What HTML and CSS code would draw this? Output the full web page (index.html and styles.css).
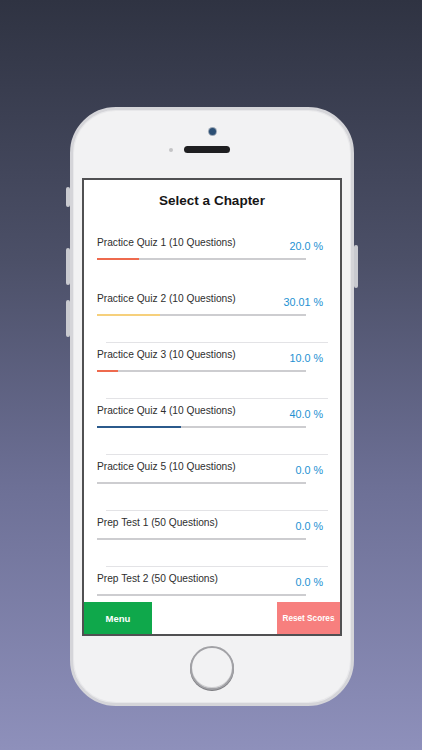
FILE: index.html
```html
<!DOCTYPE html>
<html>
<head>
<meta charset="utf-8">
<link rel="stylesheet" href="styles.css">
</head>
<body>
<div class="phone">
  <span class="btn-side mute"></span>
  <span class="btn-side vol-up"></span>
  <span class="btn-side vol-down"></span>
  <span class="btn-side power"></span>
  <div class="top">
    <div class="camera"></div>
    <div class="speaker-row">
      <span class="sensor"></span>
      <span class="speaker"></span>
    </div>
  </div>
  <div class="screen">
    <div class="title">Select a Chapter</div>
    <div class="list">
      <div class="row">
        <div class="line"><span class="label">Practice Quiz 1 (10 Questions)</span><span class="pct">20.0 %</span></div>
        <div class="bar"><span class="fill red" style="width:20%"></span></div>
      </div>
      <div class="row">
        <div class="line"><span class="label">Practice Quiz 2 (10 Questions)</span><span class="pct">30.01 %</span></div>
        <div class="bar"><span class="fill yellow" style="width:30.01%"></span></div>
      </div>
      <div class="row sep">
        <div class="line"><span class="label">Practice Quiz 3 (10 Questions)</span><span class="pct">10.0 %</span></div>
        <div class="bar"><span class="fill red" style="width:10%"></span></div>
      </div>
      <div class="row sep">
        <div class="line"><span class="label">Practice Quiz 4 (10 Questions)</span><span class="pct">40.0 %</span></div>
        <div class="bar"><span class="fill blue" style="width:40%"></span></div>
      </div>
      <div class="row sep">
        <div class="line"><span class="label">Practice Quiz 5 (10 Questions)</span><span class="pct">0.0 %</span></div>
        <div class="bar"></div>
      </div>
      <div class="row sep">
        <div class="line"><span class="label">Prep Test 1 (50 Questions)</span><span class="pct">0.0 %</span></div>
        <div class="bar"></div>
      </div>
      <div class="row sep">
        <div class="line"><span class="label">Prep Test 2 (50 Questions)</span><span class="pct">0.0 %</span></div>
        <div class="bar"></div>
      </div>
    </div>
    <div class="toolbar">
      <div class="tb-btn menu">Menu</div>
      <div class="tb-btn reset">Reset Scores</div>
    </div>
  </div>
  <div class="bottom">
    <div class="home"></div>
  </div>
</div>
</body>
</html>
```
FILE: styles.css
```css
* { box-sizing: border-box; }
html, body { margin: 0; padding: 0; }
body {
  width: 422px;
  height: 750px;
  overflow: hidden;
  background: linear-gradient(180deg, #2f3342 0%, #4c5068 35%, #6d7096 65%, #8e90bb 100%);
  display: flex;
  justify-content: center;
  padding-top: 107px;
  padding-left: 2px;
  font-family: "Liberation Sans", Arial, sans-serif;
}
.phone {
  position: relative;
  width: 284px;
  height: 599px;
  background: #f2f2f3;
  border: 3px solid #d5d5d9;
  border-radius: 46px;
  display: flex;
  flex-direction: column;
  align-items: center;
  box-shadow: inset 0 0 0 1px #e8e8ea;
}
.btn-side {
  position: absolute;
  width: 4px;
  background: #c9cad0;
  border-radius: 2px;
}
.mute { left: -7px; top: 77px; height: 20px; }
.vol-up { left: -7px; top: 138px; height: 37px; }
.vol-down { left: -7px; top: 190px; height: 37px; }
.power { right: -7px; top: 135px; height: 43px; }
.top {
  height: 68px;
  display: flex;
  flex-direction: column;
  align-items: center;
  padding-top: 18px;
}
.camera {
  width: 7px;
  height: 7px;
  border-radius: 50%;
  background: #2c4f74;
  box-shadow: 0 0 0 1px #9aa6b4;
}
.speaker-row {
  margin-top: 11px;
  display: flex;
  align-items: center;
  margin-left: -26px;
}
.sensor {
  width: 4px;
  height: 4px;
  border-radius: 50%;
  background: #c4c4c6;
  margin-right: 11px;
}
.speaker {
  width: 46px;
  height: 7px;
  border-radius: 4px;
  background: #1f1f21;
}
.screen {
  width: 260px;
  height: 458px;
  border: 2px solid #505052;
  background: #ffffff;
  display: flex;
  flex-direction: column;
  overflow: hidden;
}
.title {
  height: 50px;
  flex: none;
  padding-top: 13px;
  text-align: center;
  font-weight: bold;
  font-size: 13.5px;
  line-height: 16px;
  color: #161616;
}
.list {
  flex: 1;
  overflow: hidden;
}
.row {
  height: 56px;
  display: flex;
  flex-direction: column;
  padding-top: 7px;
}
.row.sep { padding-top: 6px; }
.row.sep::before {
  content: "";
  display: block;
  height: 1px;
  background: #e3e3e6;
  margin: -6px 12px 6px 22px;
}
.line {
  display: flex;
  justify-content: space-between;
  align-items: flex-start;
  padding-left: 13px;
  padding-right: 17px;
  height: 12px;
}
.label {
  font-size: 10.2px;
  line-height: 12px;
  color: #2e2e2e;
}
.pct {
  font-size: 10.8px;
  line-height: 12px;
  margin-top: 3px;
  color: #2390d2;
}
.bar {
  margin: 9px 34px 0 13px;
  height: 2px;
  background: #cdcdd0;
  display: flex;
}
.fill { display: block; height: 2px; }
.fill.red { background: #ee6a4e; }
.fill.yellow { background: #f6d07c; }
.fill.blue { background: #2b5a8c; }
.toolbar {
  height: 32px;
  flex: none;
  display: flex;
  justify-content: space-between;
  background: #ffffff;
}
.tb-btn {
  display: flex;
  align-items: center;
  justify-content: center;
  color: #ffffff;
  font-weight: bold;
}
.menu {
  width: 68px;
  background: #0fa84b;
  font-size: 9.5px;
}
.reset {
  width: 63px;
  background: #f77f7e;
  font-size: 8.2px;
}
.bottom {
  flex: 1;
  display: flex;
  align-items: flex-start;
  justify-content: center;
  padding-top: 10px;
}
.home {
  width: 44px;
  height: 44px;
  border-radius: 50%;
  border: 2px solid #a2a2a6;
  background: #f2f2f3;
  box-shadow: 0 1px 0 0 #7c7c80, inset 0 -1px 0 #d0d0d2;
}
```
